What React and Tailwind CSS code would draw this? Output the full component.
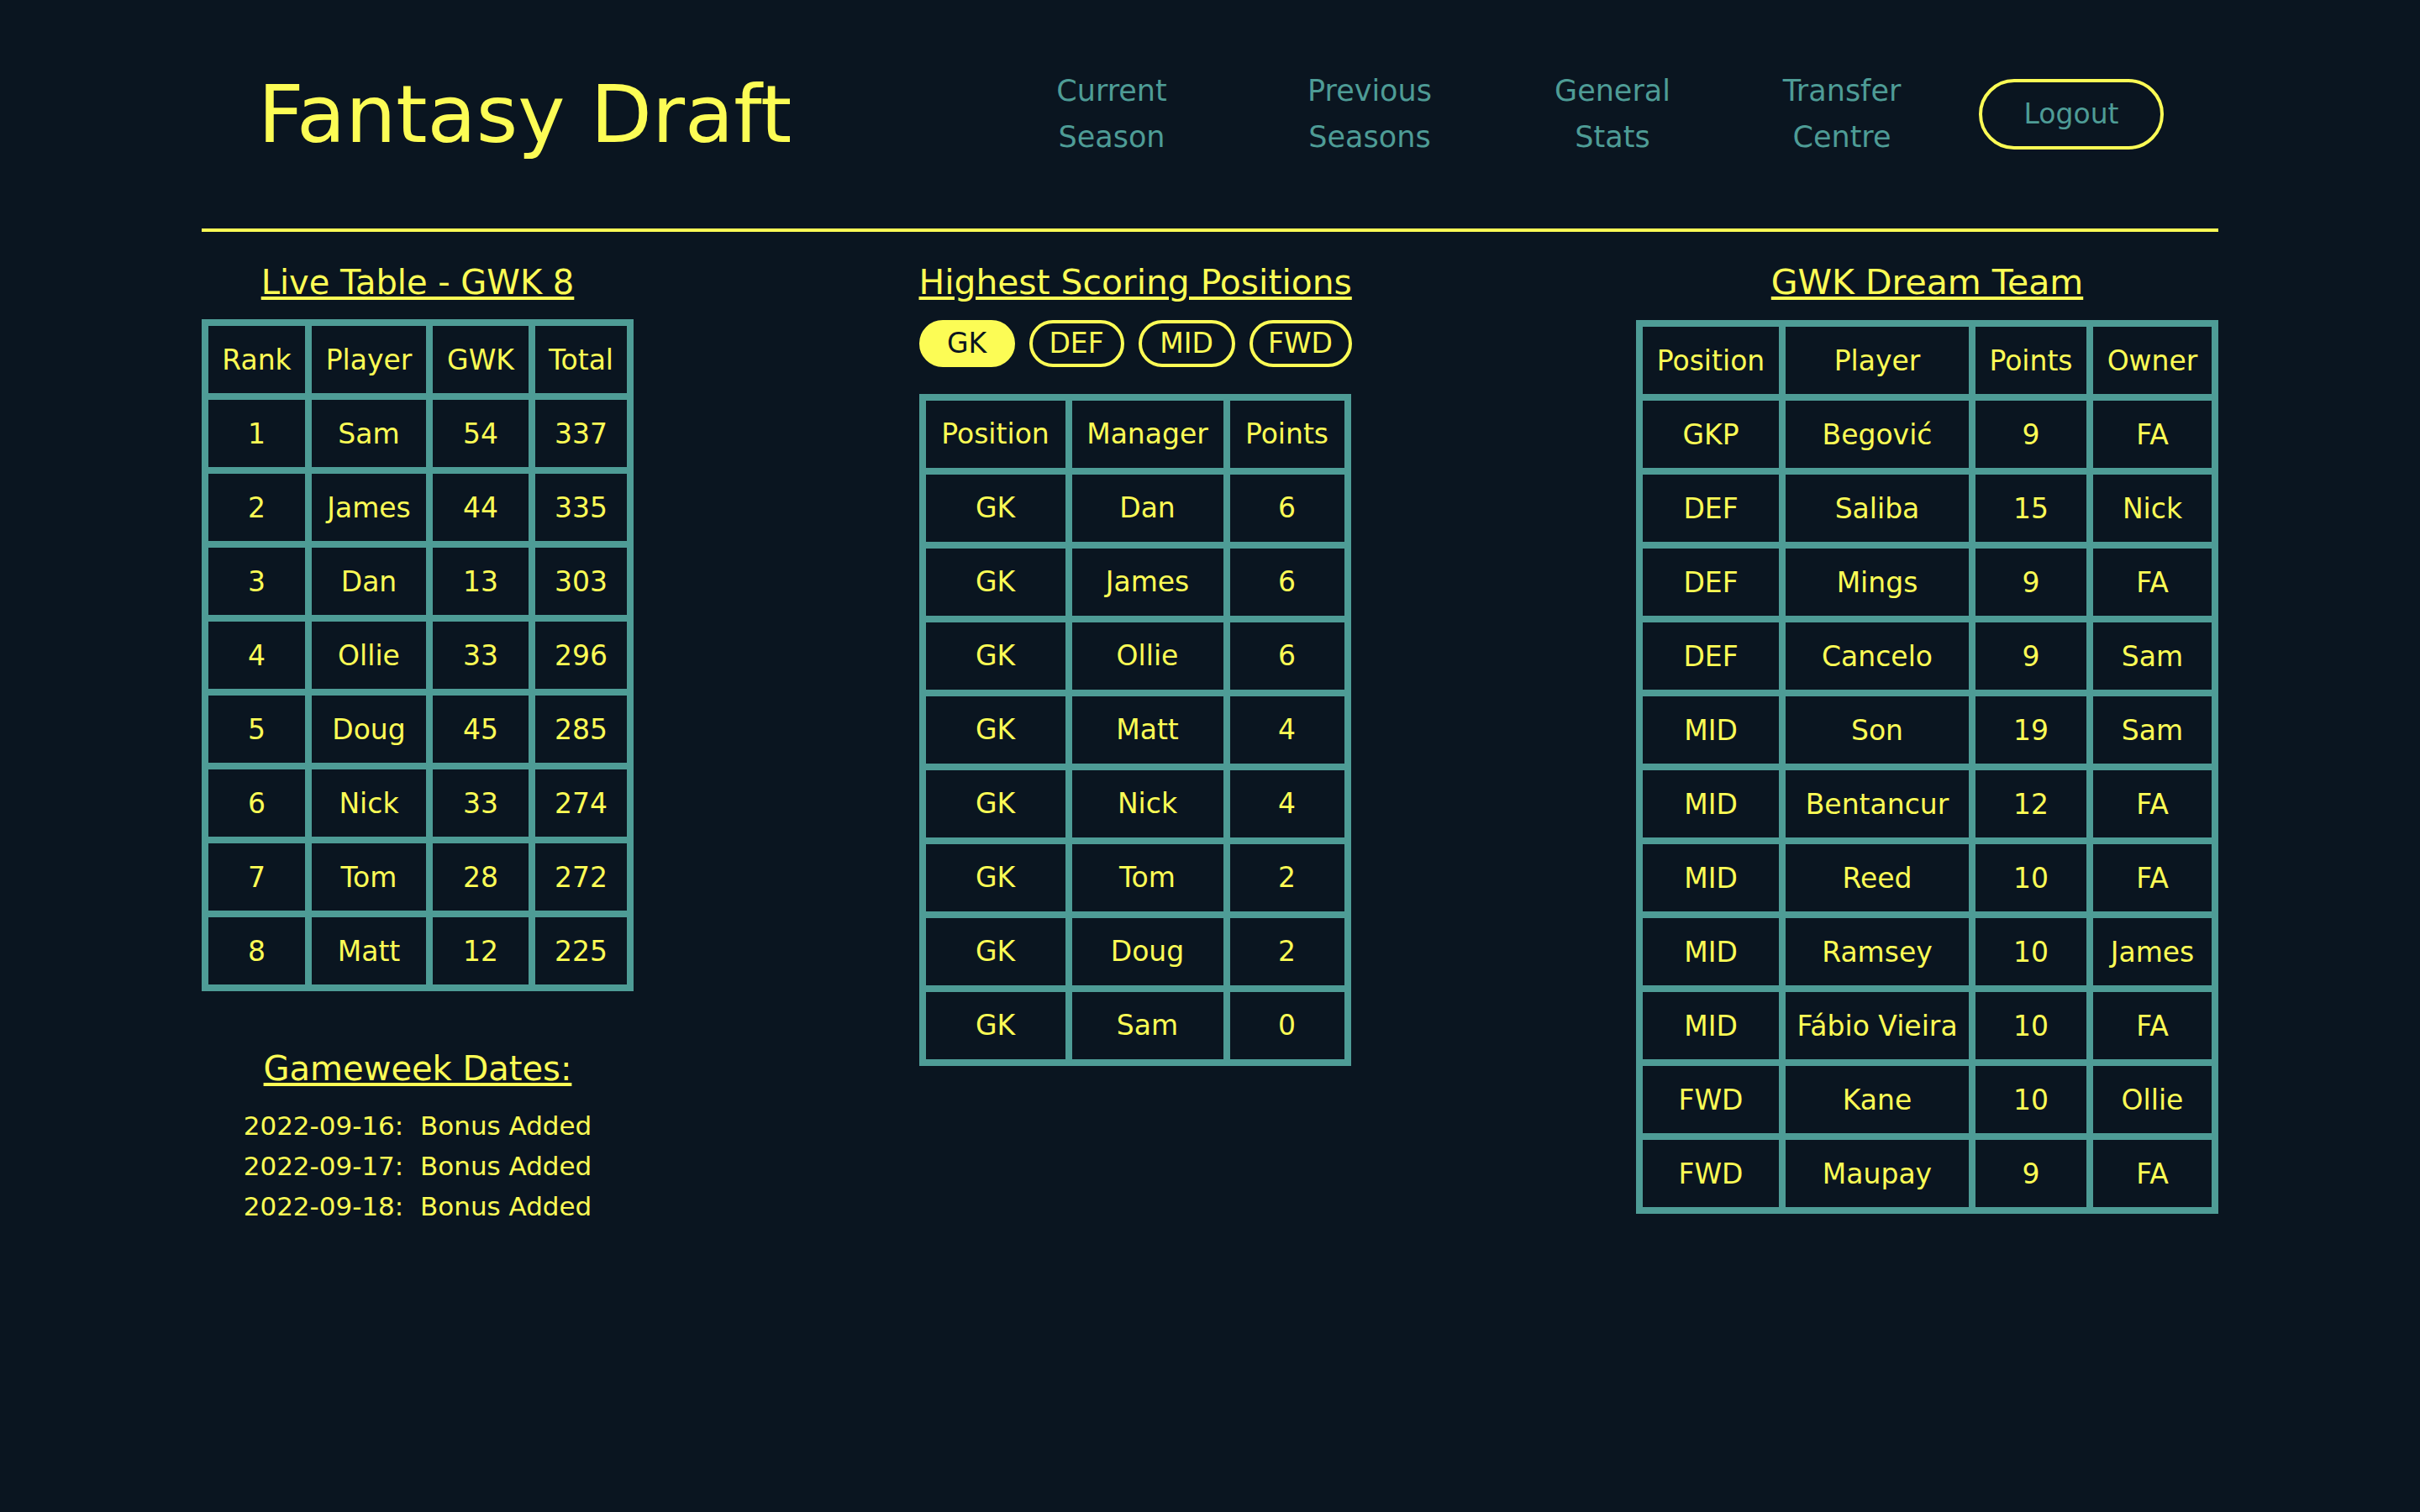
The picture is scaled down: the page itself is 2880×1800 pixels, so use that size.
import React from 'react';

const liveTable = [
  ['1', 'Sam', '54', '337'],
  ['2', 'James', '44', '335'],
  ['3', 'Dan', '13', '303'],
  ['4', 'Ollie', '33', '296'],
  ['5', 'Doug', '45', '285'],
  ['6', 'Nick', '33', '274'],
  ['7', 'Tom', '28', '272'],
  ['8', 'Matt', '12', '225'],
];

const positionRows = [
  ['GK', 'Dan', '6'],
  ['GK', 'James', '6'],
  ['GK', 'Ollie', '6'],
  ['GK', 'Matt', '4'],
  ['GK', 'Nick', '4'],
  ['GK', 'Tom', '2'],
  ['GK', 'Doug', '2'],
  ['GK', 'Sam', '0'],
];

const dreamTeam = [
  ['GKP', 'Begović', '9', 'FA'],
  ['DEF', 'Saliba', '15', 'Nick'],
  ['DEF', 'Mings', '9', 'FA'],
  ['DEF', 'Cancelo', '9', 'Sam'],
  ['MID', 'Son', '19', 'Sam'],
  ['MID', 'Bentancur', '12', 'FA'],
  ['MID', 'Reed', '10', 'FA'],
  ['MID', 'Ramsey', '10', 'James'],
  ['MID', 'Fábio Vieira', '10', 'FA'],
  ['FWD', 'Kane', '10', 'Ollie'],
  ['FWD', 'Maupay', '9', 'FA'],
];

const navLinks = [
  { top: 'Current', bottom: 'Season', w: 'w-[310px]' },
  { top: 'Previous', bottom: 'Seasons', w: 'w-[304px]' },
  { top: 'General', bottom: 'Stats', w: 'w-[274px]' },
  { top: 'Transfer', bottom: 'Centre', w: 'w-[272px]' },
];

const tabs = [
  { label: 'GK', w: 'w-[114px]', active: true },
  { label: 'DEF', w: 'w-[113px]' },
  { label: 'MID', w: 'w-[115px]' },
  { label: 'FWD', w: 'w-[122px]' },
];

function Heading({ size = 'text-[40px]', children }) {
  return (
    <h2 className={`${size} leading-none mt-[40px] underline decoration-[4px] underline-offset-[3px] whitespace-nowrap`}>
      {children}
    </h2>
  );
}

function DataTable({ columns, rows, width }) {
  return (
    <table className={`table-fixed border-separate border-spacing-[8px] bg-[#4e9c96] ${width}`}>
      <thead>
        <tr>
          {columns.map((col) => (
            <th key={col.label} className={`${col.w} h-[80px] p-0 bg-[#0a1520] font-normal text-center`}>
              {col.label}
            </th>
          ))}
        </tr>
      </thead>
      <tbody>
        {rows.map((row, i) => (
          <tr key={i}>
            {row.map((cell, j) => (
              <td key={j} className="h-[80px] p-0 bg-[#0a1520] text-center whitespace-nowrap">
                {cell}
              </td>
            ))}
          </tr>
        ))}
      </tbody>
    </table>
  );
}

export default function App() {
  return (
    <div className="min-h-screen w-full bg-[#0a1520] text-[#fcfc55] font-['DejaVu_Sans',sans-serif]">
      <div className="w-[2400px] mx-auto">
        {/* Header */}
        <header className="h-[276px] border-b-4 border-[#fcfc55] flex items-center">
          <h1 className="ml-[67px] text-[95px] leading-none whitespace-nowrap">Fantasy Draft</h1>
          <nav className="ml-auto mr-[65px] flex items-center">
            {navLinks.map((link) => (
              <a key={link.top} className={`${link.w} text-center text-[35px] leading-[55px] text-[#4e9c96]`}>
                {link.top}
                <br />
                {link.bottom}
              </a>
            ))}
            <button className="ml-[27px] w-[220px] h-[84px] rounded-full border-4 border-[#fcfc55] text-[33px] text-[#4e9c96] flex items-center justify-center">
              Logout
            </button>
          </nav>
        </header>

        {/* Columns */}
        <div className="flex justify-between items-start">
          {/* Live table + gameweek dates */}
          <section className="w-[514px] flex flex-col items-center">
            <Heading>Live Table - GWK 8</Heading>
            <div className="mt-[24px] text-[33px] leading-none">
              <DataTable
                width="w-[514px]"
                columns={[
                  { label: 'Rank', w: 'w-[115px]' },
                  { label: 'Player', w: 'w-[136px]' },
                  { label: 'GWK', w: 'w-[114px]' },
                  { label: 'Total', w: 'w-[109px]' },
                ]}
                rows={liveTable}
              />
            </div>
            <h2 className="text-[40px] leading-none mt-[72px] underline decoration-[4px] underline-offset-[3px] whitespace-nowrap">
              Gameweek Dates:
            </h2>
            <div className="mt-[24px] text-[31px] leading-[48px] whitespace-pre text-left">
              <p>2022-09-16:  Bonus Added</p>
              <p>2022-09-17:  Bonus Added</p>
              <p>2022-09-18:  Bonus Added</p>
            </div>
          </section>

          {/* Highest scoring positions */}
          <section className="w-[514px] flex flex-col items-start">
            <Heading size="text-[40.8px]">Highest Scoring Positions</Heading>
            <div className="mt-[24px] flex gap-[17px]">
              {tabs.map((tab) =>
                tab.active ? (
                  <button
                    key={tab.label}
                    className={`${tab.w} h-[56px] rounded-full border-4 border-[#fcfc55] bg-[#fcfc55] text-[#0a1520] text-[33px] leading-none flex items-center justify-center`}
                  >
                    {tab.label}
                  </button>
                ) : (
                  <button
                    key={tab.label}
                    className={`${tab.w} h-[56px] rounded-full border-4 border-[#fcfc55] text-[#fcfc55] text-[33px] leading-none flex items-center justify-center`}
                  >
                    {tab.label}
                  </button>
                )
              )}
            </div>
            <div className="mt-[32px] text-[33px] leading-none">
              <DataTable
                width="w-[514px]"
                columns={[
                  { label: 'Position', w: 'w-[166px]' },
                  { label: 'Manager', w: 'w-[180px]' },
                  { label: 'Points', w: 'w-[136px]' },
                ]}
                rows={positionRows}
              />
            </div>
          </section>

          {/* Dream team */}
          <section className="w-[693px] flex flex-col items-center">
            <Heading size="text-[41px]">GWK Dream Team</Heading>
            <div className="mt-[24px] text-[33px] leading-none">
              <DataTable
                width="w-[693px]"
                columns={[
                  { label: 'Position', w: 'w-[162px]' },
                  { label: 'Player', w: 'w-[218px]' },
                  { label: 'Points', w: 'w-[132px]' },
                  { label: 'Owner', w: 'w-[141px]' },
                ]}
                rows={dreamTeam}
              />
            </div>
          </section>
        </div>
      </div>
    </div>
  );
}
